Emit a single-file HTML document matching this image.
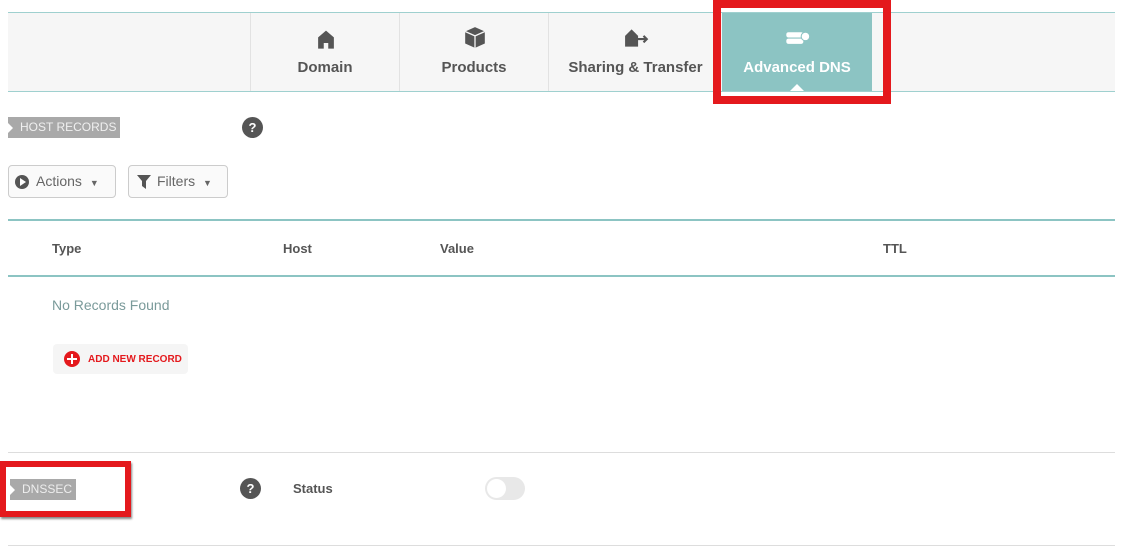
<!DOCTYPE html>
<html><head><style>
*{margin:0;padding:0;box-sizing:border-box}
body{width:1122px;height:551px;background:#fff;font-family:"Liberation Sans",sans-serif;position:relative;overflow:hidden;color:#555}
.a{position:absolute}
.tab{position:absolute;top:13px;height:78px;border-left:1px solid #e2e2e2;text-align:center;font-size:15px;font-weight:bold;color:#555}
.tab span{position:absolute;left:0;right:0;top:46px}
.q{position:absolute;width:21px;height:21px;border-radius:50%;background:#555;color:#fff;font-weight:bold;font-size:13px;text-align:center;line-height:21px}
.btn{position:absolute;height:33px;border:1px solid #ccc;border-radius:4px;background:#fafafa;font-size:14px;color:#666;line-height:31px}
.th{position:absolute;top:241px;font-size:13px;font-weight:bold;color:#555}
</style></head><body>
<div class="a" style="left:8px;top:12px;width:1107px;height:80px;background:#f6f6f6;border-top:1px solid #9fd0cf;border-bottom:1px solid #9fd0cf"></div>
<div class="tab" style="left:250px;width:149px">
<svg class="a" style="left:66px;top:16px" width="18" height="20" viewBox="0 0 16 17"><path d="M8 1L1 7v10h5v-5h4v5h5V7z" fill="#555"/></svg><span>Domain</span></div>
<div class="tab" style="left:399px;width:149px">
<svg class="a" style="left:63px;top:13px" width="24" height="23" viewBox="0 0 22 21"><path d="M11 1l9 4v11l-9 4-9-4V5z" fill="#555"/><path d="M2 5l9 4 9-4M11 9v11" stroke="#f6f6f6" stroke-width="1.2" fill="none"/></svg><span>Products</span></div>
<div class="tab" style="left:548px;width:174px">
<svg class="a" style="left:75px;top:15px" width="26" height="20" viewBox="0 0 24 18"><path d="M7 1L1 7v10h12V7z" fill="#555"/><path d="M12 10h9M18 7l3 3-3 3" stroke="#555" stroke-width="2" fill="none"/></svg><span>Sharing &amp; Transfer</span></div>
<div class="a" style="left:722px;top:13px;width:150px;height:78px;background:#8cc4c3;text-align:center;color:#fff;font-weight:bold;font-size:15px">
<svg class="a" style="left:63px;top:16px" width="26" height="17" viewBox="0 0 24 16"><rect x="1" y="3" width="16" height="5" rx="2" fill="#fff"/><rect x="1" y="9" width="16" height="5" rx="2" fill="#fff"/><circle cx="19" cy="7" r="4" fill="#fff" stroke="#8cc4c3"/></svg>
<span class="a" style="left:0;right:0;top:46px">Advanced DNS</span>
<div class="a" style="left:68px;top:71px;border:7px solid transparent;border-bottom-color:#fff;border-top:0"></div></div>
<div class="a" style="left:713px;top:0;width:178px;height:104px;border:8px solid #e4191d"></div>

<div class="a" style="left:8px;top:117px;width:112px;height:21px;background:#a9a9a9;color:#f0f0f0;font-size:12px;line-height:21px;padding-left:12px">HOST RECORDS</div>
<div class="a" style="left:8px;top:123px;border:5px solid transparent;border-left-color:#fff;border-right:0"></div>
<div class="q" style="left:242px;top:117px">?</div>
<div class="btn" style="left:8px;top:165px;width:108px;padding-left:27px">Actions <span style="font-size:9px;margin-left:4px">▼</span></div>
<div class="a" style="left:15px;top:175px;width:14px;height:14px;border-radius:50%;background:#555"></div>
<div class="a" style="left:20px;top:178px;border:4px solid transparent;border-left:6px solid #fff;border-right:0"></div>
<div class="btn" style="left:128px;top:165px;width:100px;padding-left:28px">Filters <span style="font-size:9px;margin-left:4px">▼</span></div>
<svg class="a" style="left:137px;top:175px" width="14" height="14" viewBox="0 0 14 14"><path d="M0 0h14L9 6v8L5 11V6z" fill="#555"/></svg>

<div class="a" style="left:8px;top:219px;width:1107px;height:2px;background:#8cc4c3"></div>
<div class="th" style="left:52px">Type</div><div class="th" style="left:283px">Host</div><div class="th" style="left:440px">Value</div><div class="th" style="left:883px">TTL</div>
<div class="a" style="left:8px;top:275px;width:1107px;height:2px;background:#8cc4c3"></div>
<div class="a" style="left:52px;top:297px;font-size:14px;color:#7a9a9a">No Records Found</div>
<div class="a" style="left:53px;top:344px;width:135px;height:30px;background:#f5f5f5;border-radius:4px"></div>
<div class="a" style="left:64px;top:351px;width:16px;height:16px;border-radius:50%;background:#e4191d"></div>
<div class="a" style="left:71px;top:354px;width:2px;height:10px;background:#fff"></div>
<div class="a" style="left:67px;top:358px;width:10px;height:2px;background:#fff"></div>
<div class="a" style="left:88px;top:354px;font-size:10px;font-weight:bold;color:#e4191d">ADD NEW RECORD</div>

<div class="a" style="left:8px;top:452px;width:1107px;height:1px;background:#ddd"></div>
<div class="a" style="left:0;top:461px;width:131px;height:56px;border:6px solid #e4191d;box-shadow:1px 2px 2px #888"></div>
<div class="a" style="left:10px;top:479px;width:66px;height:21px;background:#a9a9a9;color:#eee;font-size:12px;line-height:21px;padding-left:12px">DNSSEC</div>
<div class="a" style="left:10px;top:485px;border:5px solid transparent;border-left-color:#fff;border-right:0"></div>
<div class="q" style="left:240px;top:478px">?</div>
<div class="a" style="left:293px;top:481px;font-size:13px;font-weight:bold;color:#555">Status</div>
<div class="a" style="left:485px;top:477px;width:40px;height:23px;border-radius:12px;background:#e8e8e8"></div>
<div class="a" style="left:487px;top:479px;width:19px;height:19px;border-radius:50%;background:#fff"></div>
<div class="a" style="left:8px;top:545px;width:1107px;height:1px;background:#ddd"></div>
</body></html>
